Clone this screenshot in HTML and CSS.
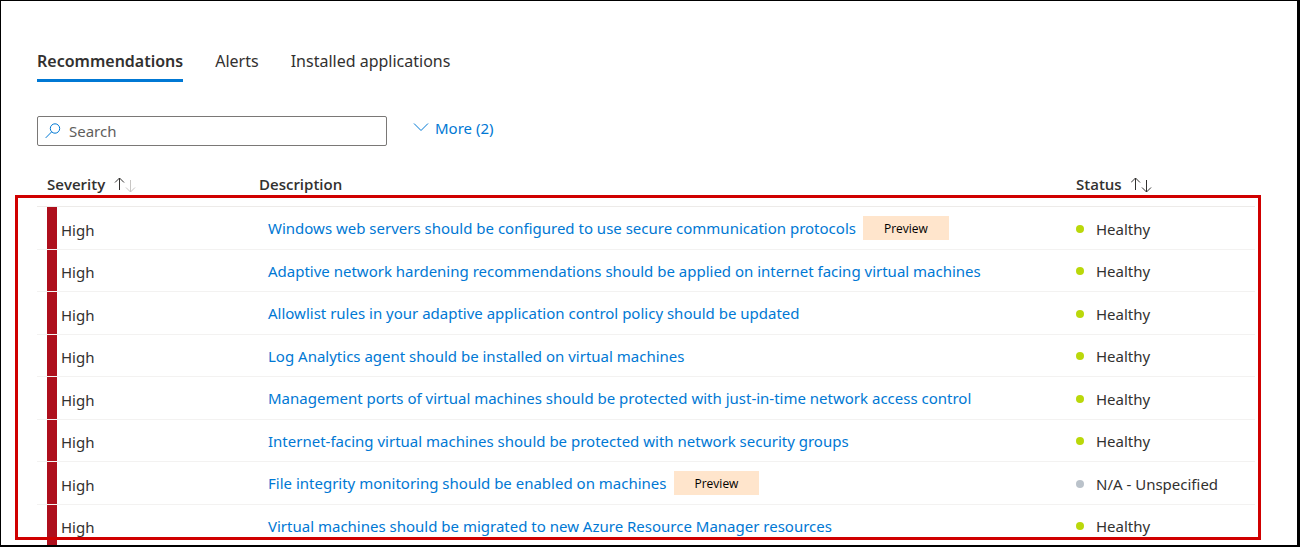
FILE: index.html
```html
<!DOCTYPE html>
<html lang="en">
<head>
<meta charset="utf-8">
<meta name="viewport" content="width=device-width, initial-scale=1">
<title>Recommendations</title>
<link rel="stylesheet" href="styles.css">
</head>
<body>
<main class="pane">
  <nav class="tabs" aria-label="Resource details">
    <button class="tab tab-active" type="button">Recommendations</button>
    <button class="tab" type="button">Alerts</button>
    <button class="tab" type="button">Installed applications</button>
  </nav>

  <div class="toolbar">
    <label class="search">
      <svg class="search-icon" width="16" height="16" viewBox="0 0 16 16" aria-hidden="true"><circle cx="10" cy="5.500" r="4.700"/><path d="M6.600 8.900 0.700 14.900"/></svg>
      <input class="search-input" type="search" placeholder="Search" aria-label="Search">
    </label>
    <button class="more" type="button">
      <svg width="16" height="10" viewBox="0 0 16 10" aria-hidden="true"><path d="M1 0.500l7 7 7-7"/></svg>
      More (2)
    </button>
  </div>

  <table class="grid">
    <colgroup><col class="col-severity"><col><col class="col-status"></colgroup>
    <thead>
      <tr>
        <th scope="col"><button class="sort" type="button">Severity
          <svg width="22" height="18" viewBox="0 0 22 18" aria-hidden="true"><path d="M5.500 15V3M1 7.500l4.500-4.500 4.500 4.500"/><path class="dim" d="M16.500 5v12M12 12.500l4.500 4.500 4.500-4.500"/></svg></button></th>
        <th scope="col">Description</th>
        <th scope="col"><button class="sort" type="button">Status
          <svg width="22" height="18" viewBox="0 0 22 18" aria-hidden="true"><path d="M4.500 15V3M0 7.500l4.500-4.500 4.500 4.500"/><path d="M15.500 5v12M11 12.500l4.500 4.500 4.500-4.500"/></svg></button></th>
      </tr>
    </thead>
    <tbody>
      <tr><td><span class="severity">High</span></td><td><div class="description"><a class="link" href="#">Windows web servers should be configured to use secure communication protocols</a><span class="badge">Preview</span></div></td><td><span class="status">Healthy</span></td></tr>
      <tr><td><span class="severity">High</span></td><td><div class="description"><a class="link" href="#">Adaptive network hardening recommendations should be applied on internet facing virtual machines</a></div></td><td><span class="status">Healthy</span></td></tr>
      <tr><td><span class="severity">High</span></td><td><div class="description"><a class="link" href="#">Allowlist rules in your adaptive application control policy should be updated</a></div></td><td><span class="status">Healthy</span></td></tr>
      <tr><td><span class="severity">High</span></td><td><div class="description"><a class="link" href="#">Log Analytics agent should be installed on virtual machines</a></div></td><td><span class="status">Healthy</span></td></tr>
      <tr><td><span class="severity">High</span></td><td><div class="description"><a class="link" href="#">Management ports of virtual machines should be protected with just-in-time network access control</a></div></td><td><span class="status">Healthy</span></td></tr>
      <tr><td><span class="severity">High</span></td><td><div class="description"><a class="link" href="#">Internet-facing virtual machines should be protected with network security groups</a></div></td><td><span class="status">Healthy</span></td></tr>
      <tr><td><span class="severity">High</span></td><td><div class="description"><a class="link" href="#">File integrity monitoring should be enabled on machines</a><span class="badge">Preview</span></div></td><td><span class="status status-na">N/A - Unspecified</span></td></tr>
      <tr><td><span class="severity">High</span></td><td><div class="description"><a class="link" href="#">Virtual machines should be migrated to new Azure Resource Manager resources</a></div></td><td><span class="status">Healthy</span></td></tr>
    </tbody>
  </table>
  <div class="highlight" aria-hidden="true"></div>
</main>
</body>
</html>
```
FILE: styles.css
```css
* { box-sizing: border-box; }

body {
  margin: 0;
  background: #fff;
  color: #323130;
  font: 15px/20px "Segoe UI", "Noto Sans", sans-serif;
}

button {
  padding: 0;
  border: 0;
  background: none;
  color: inherit;
  font: inherit;
  cursor: pointer;
}

svg {
  fill: none;
  stroke: currentColor;
  flex: none;
}

.pane {
  position: relative;
  height: 100vh;
  overflow: hidden;
  padding: 48px 42px 0 36px;
  border: solid #000;
  border-width: 1px 3px 2px 1px;
}

.tabs {
  display: flex;
  gap: 32px;
  font-size: 16px;
  line-height: 24px;
}

.tab {
  padding-bottom: 6px;
  border-bottom: 3px solid transparent;
}

.tab-active {
  border-bottom-color: #0078d4;
  font-weight: 600;
}

.toolbar {
  display: flex;
  align-items: flex-start;
  gap: 26px;
  margin-top: 34px;
}

.search {
  display: flex;
  align-items: center;
  gap: 8px;
  width: 350px;
  height: 30px;
  padding: 0 7px;
  border: 1px solid #7a7876;
  border-radius: 2px;
}

.search-icon { color: #0078d4; }

.search-input {
  flex: 1;
  min-width: 0;
  padding: 0;
  border: 0;
  outline: 0;
  background: none;
  color: inherit;
  font: inherit;
}

.search-input::placeholder { color: #605e5c; }

.more {
  display: flex;
  align-items: center;
  gap: 6px;
  padding-top: 2px;
  color: #0078d4;
}

.grid {
  width: 100%;
  margin-top: 28px;
  border-collapse: separate;
  border-spacing: 0;
  table-layout: fixed;
}

.col-severity { width: 212px; }
.col-status { width: 189px; }

th {
  height: 33px;
  padding: 0 0 12px 10px;
  border-bottom: 1px solid #edebe9;
  font-family: "Segoe UI", "Open Sans", sans-serif;
  font-weight: 600;
  text-align: left;
  white-space: nowrap;
}

.sort {
  display: flex;
  align-items: center;
  gap: 9px;
}

.dim { stroke: #c8c6c4; }

td {
  height: 43px;
  padding: 0 0 0 10px;
  border-bottom: 1px solid #f3f2f1;
  white-space: nowrap;
}

tr:nth-child(even) td { height: 42px; }

td:nth-child(2) { padding-left: 19px; }

.severity {
  display: flex;
  align-items: center;
  height: 42px;
  padding: 4px 0 0 4px;
  border-left: 10px solid #ae0f1c;
}

tr:nth-child(even) .severity {
  height: 41px;
  padding-top: 3px;
}

.description {
  display: flex;
  align-items: center;
  gap: 7px;
}

.link {
  color: #0078d4;
  text-decoration: none;
}

.badge {
  padding: 1px 21px 0;
  background: #ffe5cc;
  color: #000;
  font-family: "Segoe UI", "Open Sans", sans-serif;
  font-size: 12px;
  line-height: 23px;
}

.status {
  display: flex;
  align-items: center;
  gap: 12px;
  padding-top: 1px;
}

.status::before {
  content: "";
  width: 8px;
  height: 8px;
  border-radius: 50%;
  background: #bad80a;
}

.status-na::before { background: #bac2ca; }

.highlight {
  position: absolute;
  top: 194px;
  right: 36px;
  bottom: 5px;
  left: 14px;
  border: 3px solid #d00000;
  pointer-events: none;
}
```
